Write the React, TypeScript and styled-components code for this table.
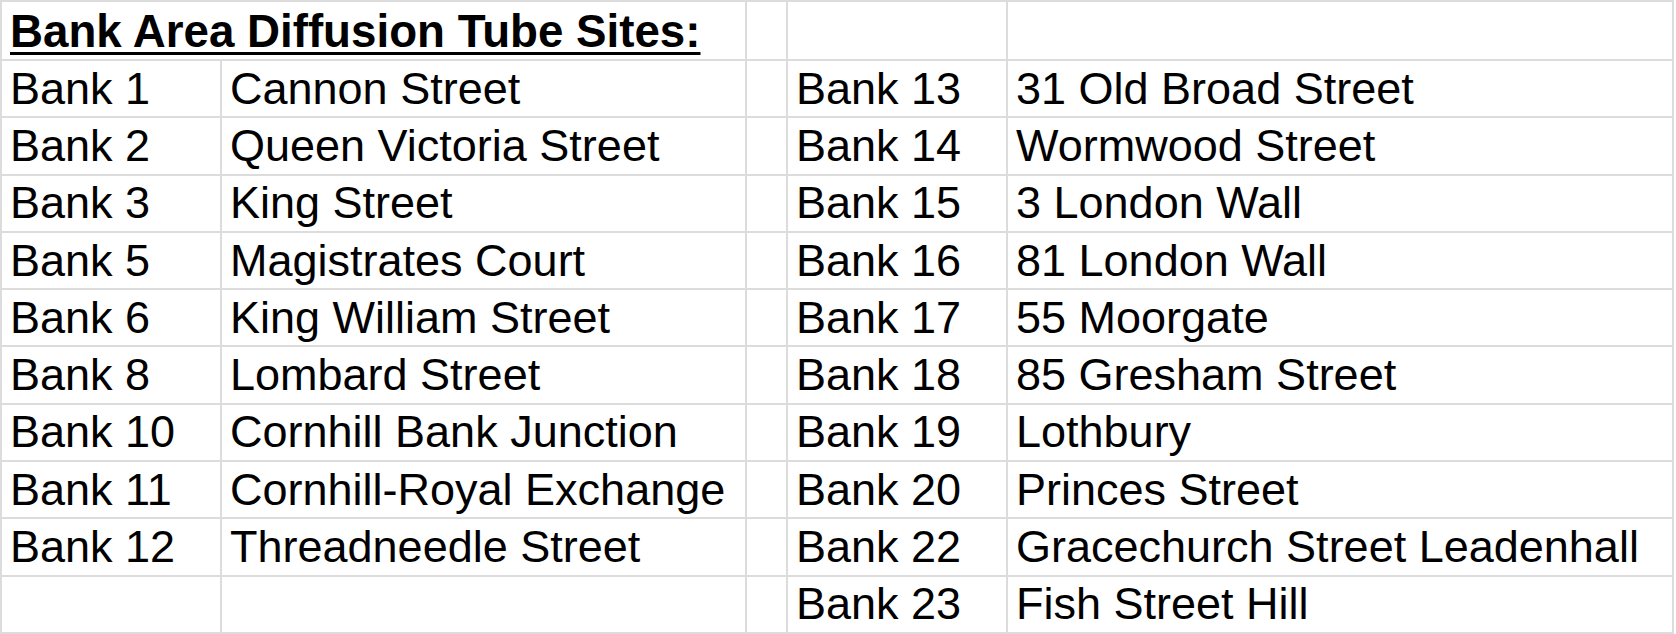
import styled, { createGlobalStyle } from "styled-components";

// 한 행: 코드 + 위치
interface SiteInterface {
  code: string;
  location: string;
}

const GlobalStyle = createGlobalStyle`
  html, body {
    margin: 0;
    padding: 0;
    background: #fff;
  }
`;

// 시트 전체 (회색 배경 + gap 이 격자선 역할)
const Sheet = styled.div`
  display: grid;
  grid-template-columns: 218px 523px 39px 218px 664px;
  grid-template-rows: 57px repeat(10, 55.3px);
  gap: 2px;
  padding: 2px;
  width: fit-content;
  background-color: #dcdcdc;
  font-family: "Liberation Sans", Arial, sans-serif;
  color: #000;
`;

const Cell = styled.div<{ $span?: number }>`
  grid-column: span ${(p) => p.$span ?? 1};
  background-color: #fff;
  display: flex;
  align-items: center;
  padding-left: 8px;
  font-size: 45px;
  white-space: nowrap;
  overflow: hidden;
  box-sizing: border-box;
`;

const TitleCell = styled(Cell)`
  align-items: flex-end;
  padding-bottom: 1px;
  font-size: 45.7px;
  font-weight: bold;
  text-decoration: underline;
  text-decoration-thickness: 3px;
  text-underline-offset: 5px;
`;

const leftSites: SiteInterface[] = [
  { code: "Bank 1", location: "Cannon Street" },
  { code: "Bank 2", location: "Queen Victoria Street" },
  { code: "Bank 3", location: "King Street" },
  { code: "Bank 5", location: "Magistrates Court" },
  { code: "Bank 6", location: "King William Street" },
  { code: "Bank 8", location: "Lombard Street" },
  { code: "Bank 10", location: "Cornhill Bank Junction" },
  { code: "Bank 11", location: "Cornhill-Royal Exchange" },
  { code: "Bank 12", location: "Threadneedle Street" },
  { code: "", location: "" },
];

const rightSites: SiteInterface[] = [
  { code: "Bank 13", location: "31 Old Broad Street" },
  { code: "Bank 14", location: "Wormwood Street" },
  { code: "Bank 15", location: "3 London Wall" },
  { code: "Bank 16", location: "81 London Wall" },
  { code: "Bank 17", location: "55 Moorgate" },
  { code: "Bank 18", location: "85 Gresham Street" },
  { code: "Bank 19", location: "Lothbury" },
  { code: "Bank 20", location: "Princes Street" },
  { code: "Bank 22", location: "Gracechurch Street Leadenhall" },
  { code: "Bank 23", location: "Fish Street Hill" },
];

function App() {
  return (
    <>
      <GlobalStyle />
      <Sheet>
        <TitleCell $span={2}>Bank Area Diffusion Tube Sites:</TitleCell>
        <Cell />
        <Cell />
        <Cell />
        {leftSites.map((left, index) => {
          const right = rightSites[index];
          return [
            <Cell key={`lc${index}`}>{left.code}</Cell>,
            <Cell key={`ll${index}`}>{left.location}</Cell>,
            <Cell key={`gap${index}`} />,
            <Cell key={`rc${index}`}>{right.code}</Cell>,
            <Cell key={`rl${index}`}>{right.location}</Cell>,
          ];
        })}
      </Sheet>
    </>
  );
}

export default App;
